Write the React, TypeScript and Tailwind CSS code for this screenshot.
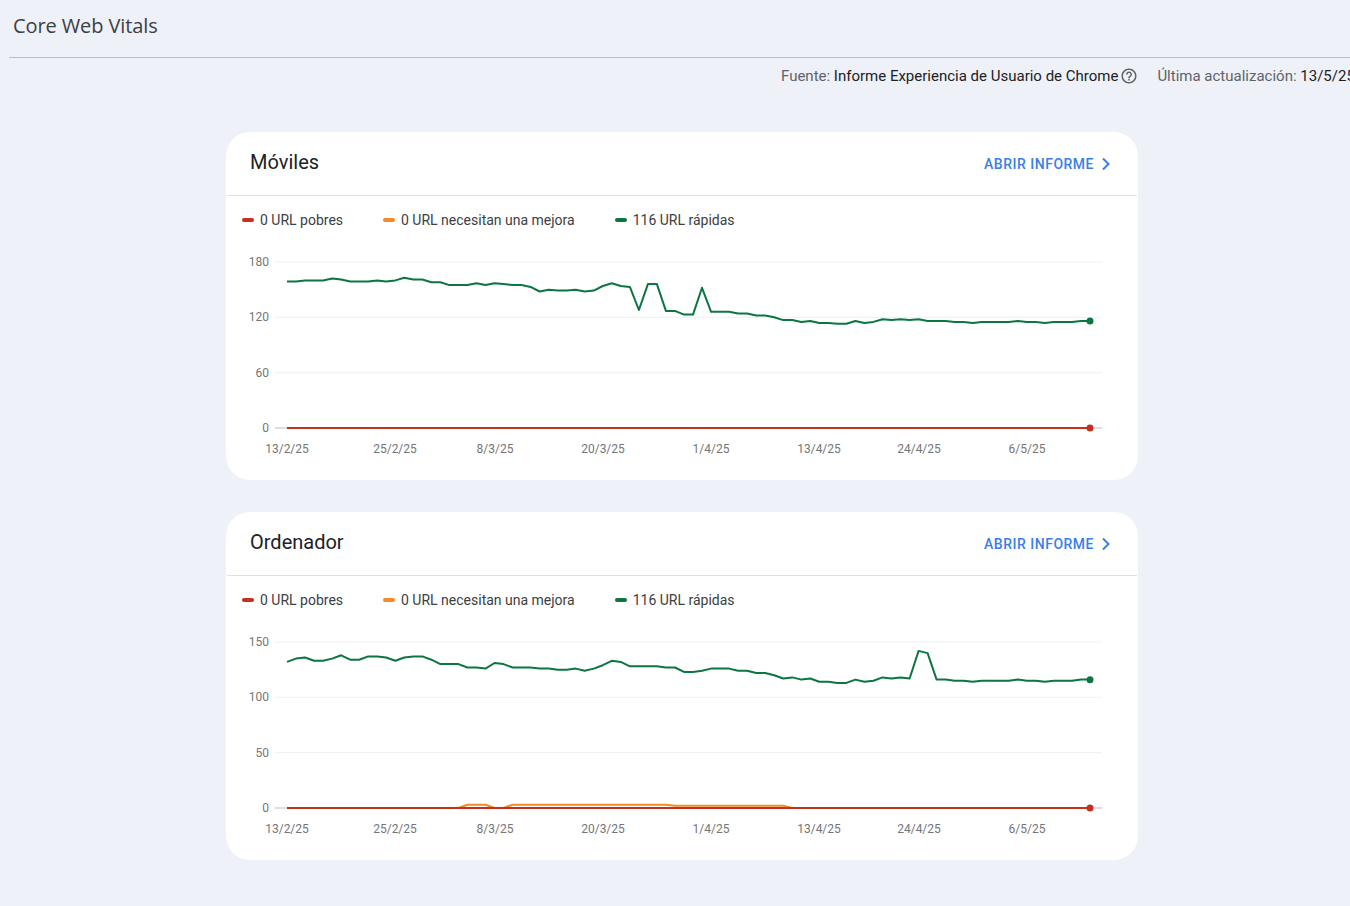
import React from 'react';

const X_LABELS = [
  { x: 61, label: '13/2/25' },
  { x: 169, label: '25/2/25' },
  { x: 269, label: '8/3/25' },
  { x: 377, label: '20/3/25' },
  { x: 485, label: '1/4/25' },
  { x: 593, label: '13/4/25' },
  { x: 693, label: '24/4/25' },
  { x: 801, label: '6/5/25' },
];

const MOBILE_GOOD = [
  159, 159, 160, 160, 160, 162, 161, 159, 159, 159,
  160, 159, 160, 163, 161, 161, 158, 158, 155, 155,
  155, 157, 155, 157, 156, 155, 155, 153, 148, 150,
  149, 149, 150, 148, 149, 154, 157, 154, 153, 128,
  156, 156, 127, 127, 123, 123, 152, 126, 126, 126,
  124, 124, 122, 122, 120, 117, 117, 115, 116, 114,
  114, 113, 113, 116, 114, 115, 118, 117, 118, 117,
  118, 116, 116, 116, 115, 115, 114, 115, 115, 115,
  115, 116, 115, 115, 114, 115, 115, 115, 116, 116,
];

const DESKTOP_GOOD = [
  132, 135, 136, 133, 133, 135, 138, 134, 134, 137,
  137, 136, 133, 136, 137, 137, 134, 130, 130, 130,
  127, 127, 126, 131, 130, 127, 127, 127, 126, 126,
  125, 125, 126, 124, 126, 129, 133, 132, 128, 128,
  128, 128, 127, 127, 123, 123, 124, 126, 126, 126,
  124, 124, 122, 122, 120, 117, 118, 116, 117, 114,
  114, 113, 113, 116, 114, 115, 118, 117, 118, 117,
  142, 140, 116, 116, 115, 115, 114, 115, 115, 115,
  115, 116, 115, 115, 114, 115, 115, 115, 116, 116,
];

const DESKTOP_MID = Array.from({ length: 90 }, (_, i) => {
  if (i < 20 || i === 23 || i === 24 || i > 55) return 0;
  return i >= 43 ? 2 : 3;
});

const ZEROS = Array.from({ length: 90 }, () => 0);

const RED = '#c5301f';
const ORANGE = '#f28b24';
const GREEN = '#0b7640';

const toPoints = (values: number[], max: number) =>
  values
    .map((v, i) => `${(61 + (i * 803) / 89).toFixed(1)},${(184 - (v / max) * 166).toFixed(1)}`)
    .join(' ');

const Chart = ({ ticks, max, good, mid }: { ticks: number[]; max: number; good: number[]; mid: number[] }) => (
  <svg width="912" height="236" viewBox="0 0 912 236" className="block">
    {ticks.map((t, i) => {
      const y = 184 - (i * 166) / 3;
      return (
        <g key={t}>
          <line x1="49" x2="876" y1={y} y2={y} stroke={i === 0 ? '#bdbdbd' : '#f0f0f0'} strokeWidth="1" />
          <text x="43" y={y + 4} textAnchor="end" fontSize="12" fill="#757575">
            {t}
          </text>
        </g>
      );
    })}
    {X_LABELS.map(l => (
      <text key={l.label} x={l.x} y="209" textAnchor="middle" fontSize="12" fill="#757575">
        {l.label}
      </text>
    ))}
    <polyline points={toPoints(mid, max)} fill="none" stroke={ORANGE} strokeWidth="2" strokeLinejoin="round" />
    <polyline points={toPoints(good, max)} fill="none" stroke={GREEN} strokeWidth="2" strokeLinejoin="round" />
    <polyline points={toPoints(ZEROS, max)} fill="none" stroke={RED} strokeWidth="2" />
    <circle cx="864" cy={184 - (good[89] / max) * 166} r="3.5" fill={GREEN} />
    <circle cx="864" cy="184" r="3.5" fill={RED} />
  </svg>
);

const Legend = () => (
  <div className="flex h-12 items-center gap-10 pl-4 text-sm text-[#3c4043]">
    <div className="flex items-center gap-1.5">
      <span className="h-1 w-3 rounded-full bg-[#c5301f]" />
      0 URL pobres
    </div>
    <div className="flex items-center gap-1.5">
      <span className="h-1 w-3 rounded-full bg-[#f28b24]" />
      0 URL necesitan una mejora
    </div>
    <div className="flex items-center gap-1.5">
      <span className="h-1 w-3 rounded-full bg-[#0b7640]" />
      116 URL rápidas
    </div>
  </div>
);

const Card = ({ title, ticks, max, good, mid }: { title: string; ticks: number[]; max: number; good: number[]; mid: number[] }) => (
  <section className="ml-[226px] h-[348px] w-[912px] overflow-hidden rounded-3xl bg-white">
    <header className="mx-px flex h-16 items-center justify-between border-b border-[#e0e0e0] pr-[26px] pl-[23px]">
      <h2 className="-mt-1 text-xl text-[#202124]">{title}</h2>
      <a className="flex items-center gap-[7px] text-sm font-medium tracking-[0.5px] text-[#3b7de9]">
        ABRIR INFORME
        <svg width="10" height="14" viewBox="0 0 10 14" fill="none" stroke="currentColor" strokeWidth="2">
          <path d="M2 1.5 7.5 7 2 12.5" />
        </svg>
      </a>
    </header>
    <Legend />
    <Chart ticks={ticks} max={max} good={good} mid={mid} />
  </section>
);

export default function App() {
  return (
    <div className="h-[906px] w-[1350px] overflow-hidden bg-[#eef1f8] font-[Roboto,sans-serif]">
      <div className="ml-[9px] flex h-[58px] items-center border-b border-[#bdbdbd] pb-[5px] pl-1">
        <h1 className="font-['Open_Sans',sans-serif] text-xl font-medium tracking-[-0.1px] text-[#3c4043]">Core Web Vitals</h1>
      </div>
      <div className="flex h-[36px] items-center whitespace-nowrap pl-[781px] text-[15px] text-[#5f6368]">
        <span>Fuente:&nbsp;</span>
        <span className="text-[#202124]">Informe Experiencia de Usuario de Chrome</span>
        <svg width="18" height="18" viewBox="0 0 24 24" fill="#5f6368" className="ml-[2px] shrink-0">
          <path d="M11 18h2v-2h-2v2zm1-16C6.48 2 2 6.48 2 12s4.48 10 10 10 10-4.48 10-10S17.52 2 12 2zm0 18c-4.41 0-8-3.59-8-8s3.59-8 8-8 8 3.59 8 8-3.59 8-8 8zm0-14c-2.21 0-4 1.79-4 4h2c0-1.1.9-2 2-2s2 .9 2 2c0 2-3 1.75-3 5h2c0-2.25 3-2.5 3-5 0-2.21-1.79-4-4-4z" />
        </svg>
        <span className="ml-[19px]">Última actualización:&nbsp;</span>
        <span className="text-[#202124]">13/5/25</span>
      </div>
      <div className="mt-[38px] flex flex-col gap-8">
        <Card title="Móviles" ticks={[0, 60, 120, 180]} max={180} good={MOBILE_GOOD} mid={ZEROS} />
        <Card title="Ordenador" ticks={[0, 50, 100, 150]} max={150} good={DESKTOP_GOOD} mid={DESKTOP_MID} />
      </div>
    </div>
  );
}
